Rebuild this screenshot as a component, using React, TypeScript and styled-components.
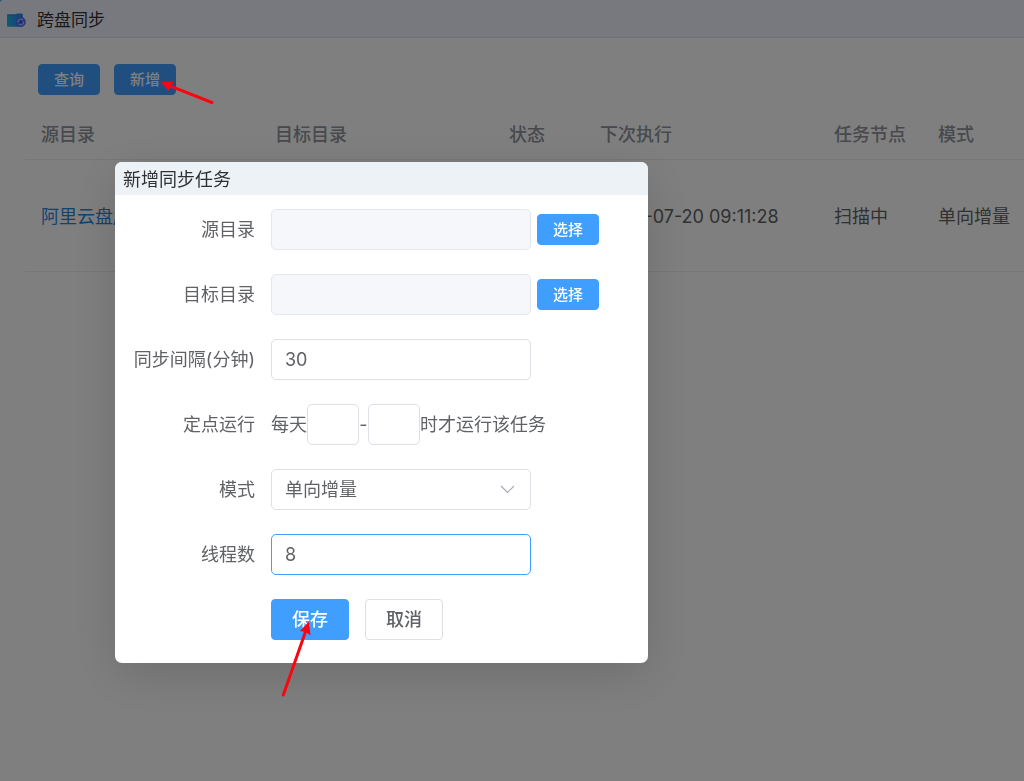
import React from "react";
import styled, { createGlobalStyle, css } from "styled-components";

const GlobalStyle = createGlobalStyle`
  *, *::before, *::after { box-sizing: border-box; }
  body {
    margin: 0;
    background: #ffffff;
    color: #606266;
    font-family: Inter, "Noto Sans CJK SC", sans-serif;
    font-size: 18px;
    line-height: 24px;
  }
  button, input, select { font: inherit; color: inherit; }
`;

const Page = styled.div`
  min-height: 100vh;
  overflow: hidden;
`;

const TitleCorner = styled.div`
  background: #28b4e0;
`;

const TitleBar = styled.header`
  display: flex;
  align-items: center;
  gap: 10px;
  height: 38px;
  padding: 2px 6px 0;
  background: #f1f3fc;
  border-bottom: 1px solid #dfe0f0;
  border-top-left-radius: 3px;
`;

const TitleText = styled.h1`
  margin: 0;
  font-size: 17px;
  font-weight: 400;
  color: #303133;
`;

const Content = styled.main`
  padding: 26px 0 0 25px;
`;

const Toolbar = styled.div`
  display: flex;
  gap: 14px;
  padding: 0 13px;
`;

const Button = styled.button<{ $kind?: "primary" | "plain"; $size?: "small" | "large" }>`
  display: inline-flex;
  align-items: center;
  justify-content: center;
  flex: none;
  border-radius: 4px;
  font-weight: 500;
  cursor: pointer;
  ${({ $size = "small" }) =>
    $size === "small"
      ? css`
          height: 31px;
          padding: 0 15px;
          font-size: 15px;
        `
      : css`
          height: 41px;
          padding: 0 20px;
          font-size: 18px;
        `}
  ${({ $kind = "primary" }) =>
    $kind === "primary"
      ? css`
          border: 1px solid #409eff;
          background: #409eff;
          color: #ffffff;
        `
      : css`
          border: 1px solid #dcdfe6;
          background: #ffffff;
          color: #606266;
        `}
`;

const TaskTable = styled.table`
  width: 100%;
  min-width: 999px;
  margin-top: 13px;
  table-layout: fixed;
  border-collapse: collapse;
  text-align: left;
`;

const Column = styled.col<{ $width?: number }>`
  width: ${({ $width }) => ($width ? `${$width}px` : "auto")};
`;

const HeadCell = styled.th`
  height: 51px;
  padding: 4px 0 0 16px;
  border-bottom: 1px solid #ebeef5;
  font-weight: 500;
  color: #909399;
`;

const Cell = styled.td`
  height: 112px;
  padding: 4px 0 0 16px;
  border-bottom: 1px solid #ebeef5;
  white-space: nowrap;
`;

const PathLink = styled.a`
  color: #1e88e5;
  text-decoration: none;
`;

const Overlay = styled.div`
  position: fixed;
  inset: 0;
  padding: 162px 115px;
  background: rgba(0, 0, 0, 0.5);
`;

const Dialog = styled.section`
  width: 533px;
  max-width: 100%;
  overflow: hidden;
  border-radius: 7px;
  background: #ffffff;
  box-shadow: 0 12px 48px rgba(0, 0, 0, 0.14);
`;

const DialogTitle = styled.h2`
  margin: 0;
  padding: 6px 8px 3px;
  background: #edf2f7;
  font-size: 18px;
  font-weight: 400;
  color: #303133;
`;

const Form = styled.form`
  display: grid;
  gap: 24px;
  padding: 14px 0 23px;
`;

const FormRow = styled.div`
  display: grid;
  grid-template-columns: 140px 1fr;
  gap: 16px;
  align-items: center;
`;

const Label = styled.label`
  text-align: right;
  white-space: nowrap;
`;

const Field = styled.div<{ $gap?: number }>`
  grid-column: 2;
  display: flex;
  align-items: center;
  gap: ${({ $gap = 0 }) => $gap}px;
  white-space: nowrap;
`;

const controlStyle = css`
  height: 41px;
  border: 1px solid #dcdfe6;
  border-radius: 5px;
  background: #ffffff;
  outline: none;
`;

const TextInput = styled.input<{ $active?: boolean }>`
  ${controlStyle}
  width: 260px;
  padding: 0 13px;
  border-color: ${({ $active }) => ($active ? "#409eff" : "#dcdfe6")};
  &:disabled {
    background: #f5f7fa;
    border-color: #e4e7ed;
  }
`;

const HourInput = styled.input`
  ${controlStyle}
  width: 52px;
  padding: 0 8px;
`;

const Dash = styled.span`
  width: 9px;
  text-align: center;
`;

const SelectBox = styled.div`
  display: grid;
  align-items: center;
  width: 260px;
  > * {
    grid-area: 1 / 1;
  }
  > svg {
    justify-self: end;
    margin-right: 16px;
    pointer-events: none;
  }
`;

const Select = styled.select`
  ${controlStyle}
  width: 100%;
  padding: 0 40px 0 13px;
  appearance: none;
`;

const Annotations = styled.svg`
  position: fixed;
  top: 0;
  left: 0;
  pointer-events: none;
`;

function SyncFolderIcon() {
  return (
    <svg width="21" height="16" viewBox="0 0 21 16" aria-hidden="true">
      <defs>
        <linearGradient id="folder" x1="0" y1="0" x2="1" y2="0">
          <stop offset="0" stopColor="#20b4e8" />
          <stop offset="1" stopColor="#2a80f4" />
        </linearGradient>
      </defs>
      <path d="M1 3Q1 2.2 1.8 2.2H9.6L11.2 1.4H15.6Q16.8 1.4 16.8 2.6V13.6Q16.8 14.8 15.6 14.8H2.2Q1 14.8 1 13.6Z" fill="url(#folder)" />
      <path d="M1.2 3.2H9.8L11.4 2.4" fill="none" stroke="#1c7ad6" strokeWidth="0.6" />
      <circle cx="14.8" cy="10" r="5" fill="#4a6cfa" />
      <path d="M11.9 10.6A3 3 0 0 1 16.2 7.4L16.8 8M17.7 9.4A3 3 0 0 1 13.4 12.6L12.8 12" fill="none" stroke="#c4d0ff" strokeWidth="1.1" />
      <circle cx="14.8" cy="10" r="1" fill="#2c46d8" />
    </svg>
  );
}

function Chevron() {
  return (
    <svg width="16" height="16" viewBox="0 0 16 16" aria-hidden="true">
      <path d="M2 4L8.5 10.5L15 4" fill="none" stroke="#a8abb2" strokeWidth="1.2" />
    </svg>
  );
}

export default function App() {
  return (
    <>
      <GlobalStyle />
      <Page>
        <TitleCorner>
          <TitleBar>
            <SyncFolderIcon />
            <TitleText>跨盘同步</TitleText>
          </TitleBar>
        </TitleCorner>
        <Content>
          <Toolbar>
            <Button type="button">查询</Button>
            <Button type="button">新增</Button>
          </Toolbar>
          <TaskTable>
            <colgroup>
              <Column $width={234} />
              <Column $width={234} />
              <Column $width={91} />
              <Column $width={234} />
              <Column $width={104} />
              <Column />
            </colgroup>
            <thead>
              <tr>
                {["源目录", "目标目录", "状态", "下次执行", "任务节点", "模式"].map((name) => (
                  <HeadCell key={name} scope="col">{name}</HeadCell>
                ))}
              </tr>
            </thead>
            <tbody>
              <tr>
                <Cell><PathLink href="#source">阿里云盘/</PathLink></Cell>
                <Cell />
                <Cell />
                <Cell>2023-07-20 09:11:28</Cell>
                <Cell>扫描中</Cell>
                <Cell>单向增量</Cell>
              </tr>
            </tbody>
          </TaskTable>
        </Content>
      </Page>

      <Overlay>
        <Dialog role="dialog" aria-modal="true" aria-labelledby="dialog-title">
          <DialogTitle id="dialog-title">新增同步任务</DialogTitle>
          <Form onSubmit={(event) => event.preventDefault()}>
            <FormRow>
              <Label htmlFor="source">源目录</Label>
              <Field $gap={6}>
                <TextInput id="source" disabled />
                <Button type="button">选择</Button>
              </Field>
            </FormRow>
            <FormRow>
              <Label htmlFor="target">目标目录</Label>
              <Field $gap={6}>
                <TextInput id="target" disabled />
                <Button type="button">选择</Button>
              </Field>
            </FormRow>
            <FormRow>
              <Label htmlFor="interval">同步间隔(分钟)</Label>
              <Field>
                <TextInput id="interval" defaultValue="30" />
              </Field>
            </FormRow>
            <FormRow>
              <Label htmlFor="hour-from">定点运行</Label>
              <Field>
                <span>每天</span>
                <HourInput id="hour-from" />
                <Dash>-</Dash>
                <HourInput aria-label="结束时间" />
                <span>时才运行该任务</span>
              </Field>
            </FormRow>
            <FormRow>
              <Label htmlFor="mode">模式</Label>
              <Field>
                <SelectBox>
                  <Select id="mode" defaultValue="increment">
                    <option value="increment">单向增量</option>
                  </Select>
                  <Chevron />
                </SelectBox>
              </Field>
            </FormRow>
            <FormRow>
              <Label htmlFor="threads">线程数</Label>
              <Field>
                <TextInput id="threads" defaultValue="8" $active />
              </Field>
            </FormRow>
            <FormRow>
              <Field $gap={16}>
                <Button type="submit" $size="large">保存</Button>
                <Button type="button" $size="large" $kind="plain">取消</Button>
              </Field>
            </FormRow>
          </Form>
        </Dialog>
      </Overlay>

      <Annotations width="700" height="720" viewBox="0 0 700 720" aria-hidden="true">
        <g stroke="#fb0510" strokeWidth="3" strokeLinecap="round" fill="#fb0510">
          <path d="M212 102.5L171 86.4" />
          <path d="M160.5 82.2L173.5 81.5L171 86.4L169 91Z" stroke="none" />
          <path d="M283.3 695L305.4 632" />
          <path d="M309 621.5L310.5 635.2L305.4 632L300 631Z" stroke="none" />
        </g>
      </Annotations>
    </>
  );
}
